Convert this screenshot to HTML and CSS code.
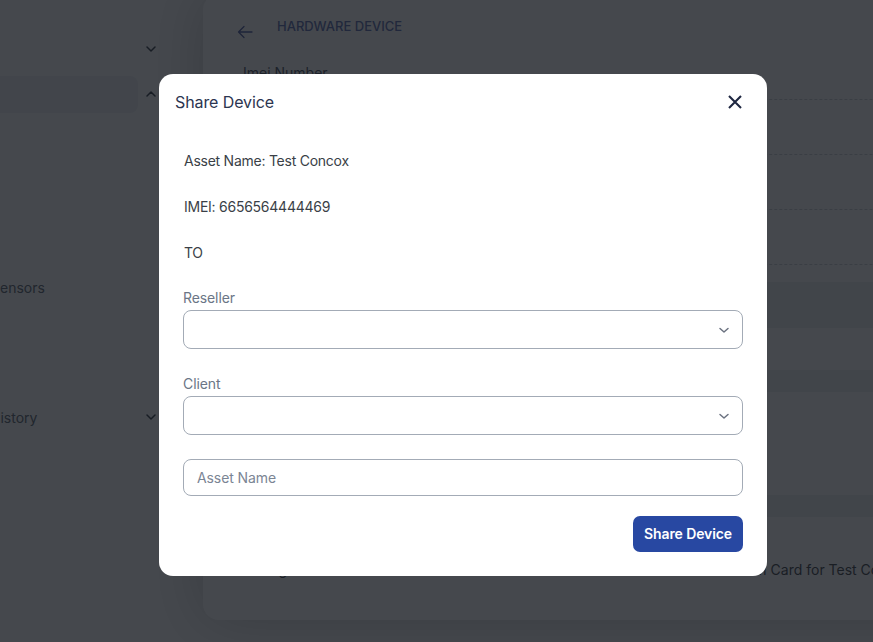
FILE: index.html
```html
<!DOCTYPE html>
<html lang="en">
<head>
    <meta charset="UTF-8">
    <meta name="viewport" content="width=device-width, initial-scale=1.0">
    <title>Hardware Device</title>
    <link rel="stylesheet" href="styles.css">
</head>
<body>
    <div class="app">
        <aside class="sidebar">
            <div class="nav-row first">
                <span class="label"></span>
                <svg class="chev" viewBox="0 0 12 12"><path d="M2 4l4 4 4-4"/></svg>
            </div>
            <div class="nav-row">
                <span class="pill"></span>
                <svg class="chev" viewBox="0 0 12 12"><path d="M2 8l4-4 4 4"/></svg>
            </div>
            <div class="nav-row sensors">
                <span class="label cut-s">Sensors</span>
            </div>
            <div class="nav-row history">
                <span class="label cut-h">History</span>
                <svg class="chev" viewBox="0 0 12 12"><path d="M2 4l4 4 4-4"/></svg>
            </div>
        </aside>

        <main class="content">
            <section class="card">
                <div class="card-head">
                    <svg class="back" viewBox="0 0 16 16"><path d="M15 8H1.5M7 2.5L1.5 8 7 13.5"/></svg>
                    <h2>Hardware Device</h2>
                </div>
                <div class="details">
                    <div class="row"><span>Imei Number</span></div>
                    <div class="row"><span>Device Model</span></div>
                    <div class="row"><span>Sim Number</span></div>
                    <div class="row"><span>Status</span></div>
                </div>
                <div class="band tall"></div>
                <div class="blank h42"></div>
                <div class="band short"></div>
                <div class="blank h103"></div>
                <div class="band short"></div>
                <div class="foot-row">
                    <span>Config</span>
                    <span>Sim Card for Test Concox</span>
                </div>
            </section>
        </main>
    </div>

    <div class="overlay">
        <div class="modal">
            <div class="modal-head">
                <h3>Share Device</h3>
                <button class="close" type="button">
                    <svg viewBox="0 0 16 16"><path d="M2 2l12 12M14 2L2 14"/></svg>
                </button>
            </div>
            <div class="modal-body">
                <p>Asset Name: Test Concox</p>
                <p>IMEI: 6656564444469</p>
                <p>TO</p>

                <label for="reseller">Reseller</label>
                <div class="select-wrap">
                    <select id="reseller"><option></option></select>
                    <svg viewBox="0 0 12 12"><path d="M2 4.5l4 3.5 4-3.5"/></svg>
                </div>

                <label for="client">Client</label>
                <div class="select-wrap">
                    <select id="client"><option></option></select>
                    <svg viewBox="0 0 12 12"><path d="M2 4.5l4 3.5 4-3.5"/></svg>
                </div>

                <input type="text" class="asset-input" placeholder="Asset Name">

                <div class="actions">
                    <button type="button" class="btn-primary">Share Device</button>
                </div>
            </div>
        </div>
    </div>
</body>
</html>
```

FILE: styles.css
```css
/* Grundlayout */
body {
    margin: 0;
    font-family: Inter, "Noto Sans", sans-serif;
    background: #fff;
    height: 642px;
    overflow: hidden;
}

.app {
    display: flex;
}

/* Sidebar (angeschnitten) */
.sidebar {
    width: 203px;
    flex-shrink: 0;
    overflow: hidden;
}

.nav-row {
    display: flex;
    align-items: center;
    height: 38px;
    width: 157px;
}

.nav-row.first {
    margin-top: 30px;
    margin-bottom: 7px;
}

.nav-row.sensors {
    margin-top: 155px;
}

.nav-row.history {
    margin-top: 92px;
}

.label {
    flex: 1;
    font-size: 14px;
    color: #4b5563;
}

.cut-s { margin-left: -9px; }
.cut-h { margin-left: -10px; }

.pill {
    width: 138px;
    height: 37px;
    background: #eef0f3;
    border-radius: 0 8px 8px 0;
}

.chev {
    width: 12px;
    height: 12px;
    margin-left: auto;
    fill: none;
    stroke: #1f2937;
    stroke-width: 1.5;
    stroke-linecap: round;
    stroke-linejoin: round;
}

/* Hauptbereich */
.content {
    flex: 1;
}

.card {
    width: 900px;
    height: 626px;
    margin-top: -6px;
    background: #fff;
    border-radius: 16px;
    box-shadow: 0 0 60px rgba(0, 0, 0, 0.25);
}

.card-head {
    height: 51px;
    box-sizing: border-box;
    padding: 23px 0 0 34px;
    display: flex;
    align-items: flex-start;
}

.back {
    width: 16px;
    height: 16px;
    margin-top: 7px;
    fill: none;
    stroke: #3d4f9a;
    stroke-width: 1.3;
    stroke-linecap: round;
    stroke-linejoin: round;
}

.card-head h2 {
    margin: 0 0 0 24px;
    font-size: 13px;
    line-height: 18px;
    font-weight: 500;
    text-transform: uppercase;
    color: #4d5fa8;
}

.details .row {
    height: 55px;
    box-sizing: border-box;
    padding: 0 40px;
    display: flex;
    align-items: center;
    border-bottom: 1px dashed #c9cdd3;
    font-size: 14px;
    color: #374151;
}

.band {
    background: #eceef1;
}

.band.tall {
    margin-top: 17px;
    height: 46px;
}

.band.short {
    height: 22px;
}

.blank.h42 { height: 42px; }
.blank.h103 { height: 103px; }

.foot-row {
    padding: 43px 40px 0;
    display: grid;
    grid-template-columns: 499px 1fr;
    font-size: 14px;
    line-height: 20px;
    color: #2b2f36;
}

/* Modal */
.overlay {
    position: fixed;
    inset: 0;
    background: rgba(22, 26, 33, 0.8);
    display: flex;
    align-items: center;
    justify-content: center;
    padding: 7px 0 0 53px;
}

.modal {
    width: 608px;
    background: #fff;
    border-radius: 14px;
}

.modal-head {
    display: flex;
    align-items: center;
    justify-content: space-between;
    padding: 16px 24px 16px 16px;
}

.modal-head h3 {
    margin: 0;
    font-size: 16px;
    line-height: 24px;
    font-weight: 400;
    letter-spacing: -0.1px;
    color: #2c3550;
}

.close {
    border: none;
    background: none;
    padding: 0;
    width: 16px;
    height: 16px;
    cursor: pointer;
}

.close svg {
    display: block;
    width: 16px;
    height: 16px;
    fill: none;
    stroke: #1e2741;
    stroke-width: 2.1;
}

.modal-body {
    padding: 21px 24px 24px;
}

.modal-body p {
    margin: 0 0 26px 1px;
    font-size: 14px;
    line-height: 20px;
    letter-spacing: -0.25px;
    color: #3a3f47;
}

.modal-body p:nth-of-type(3) {
    margin-bottom: 25px;
}

.modal-body label {
    display: block;
    font-size: 14px;
    line-height: 20px;
    letter-spacing: -0.1px;
    color: #6b7686;
    margin-bottom: 2px;
}

.select-wrap {
    position: relative;
    margin-bottom: 25px;
}

.select-wrap select {
    display: block;
    width: 100%;
    height: 39px;
    appearance: none;
    background: #fff;
    border: 1px solid #a3abb6;
    border-radius: 8px;
    font-family: inherit;
    font-size: 14px;
}

.select-wrap svg {
    position: absolute;
    right: 13px;
    top: 14px;
    width: 12px;
    height: 12px;
    fill: none;
    stroke: #6b7280;
    stroke-width: 1.5;
    stroke-linecap: round;
    stroke-linejoin: round;
}

.asset-input {
    display: block;
    box-sizing: border-box;
    width: 100%;
    height: 37px;
    margin-top: -1px;
    padding: 0 13px;
    border: 1px solid #a3abb6;
    border-radius: 8px;
    font-family: inherit;
    font-size: 14px;
    letter-spacing: -0.1px;
}

.asset-input::placeholder {
    color: #7b8594;
}

.actions {
    display: flex;
    justify-content: flex-end;
    margin-top: 20px;
}

.btn-primary {
    width: 110px;
    height: 36px;
    border: none;
    border-radius: 7px;
    background: #2848a2;
    color: #fff;
    font-family: inherit;
    font-size: 14px;
    font-weight: 600;
    letter-spacing: -0.1px;
    cursor: pointer;
}
```
